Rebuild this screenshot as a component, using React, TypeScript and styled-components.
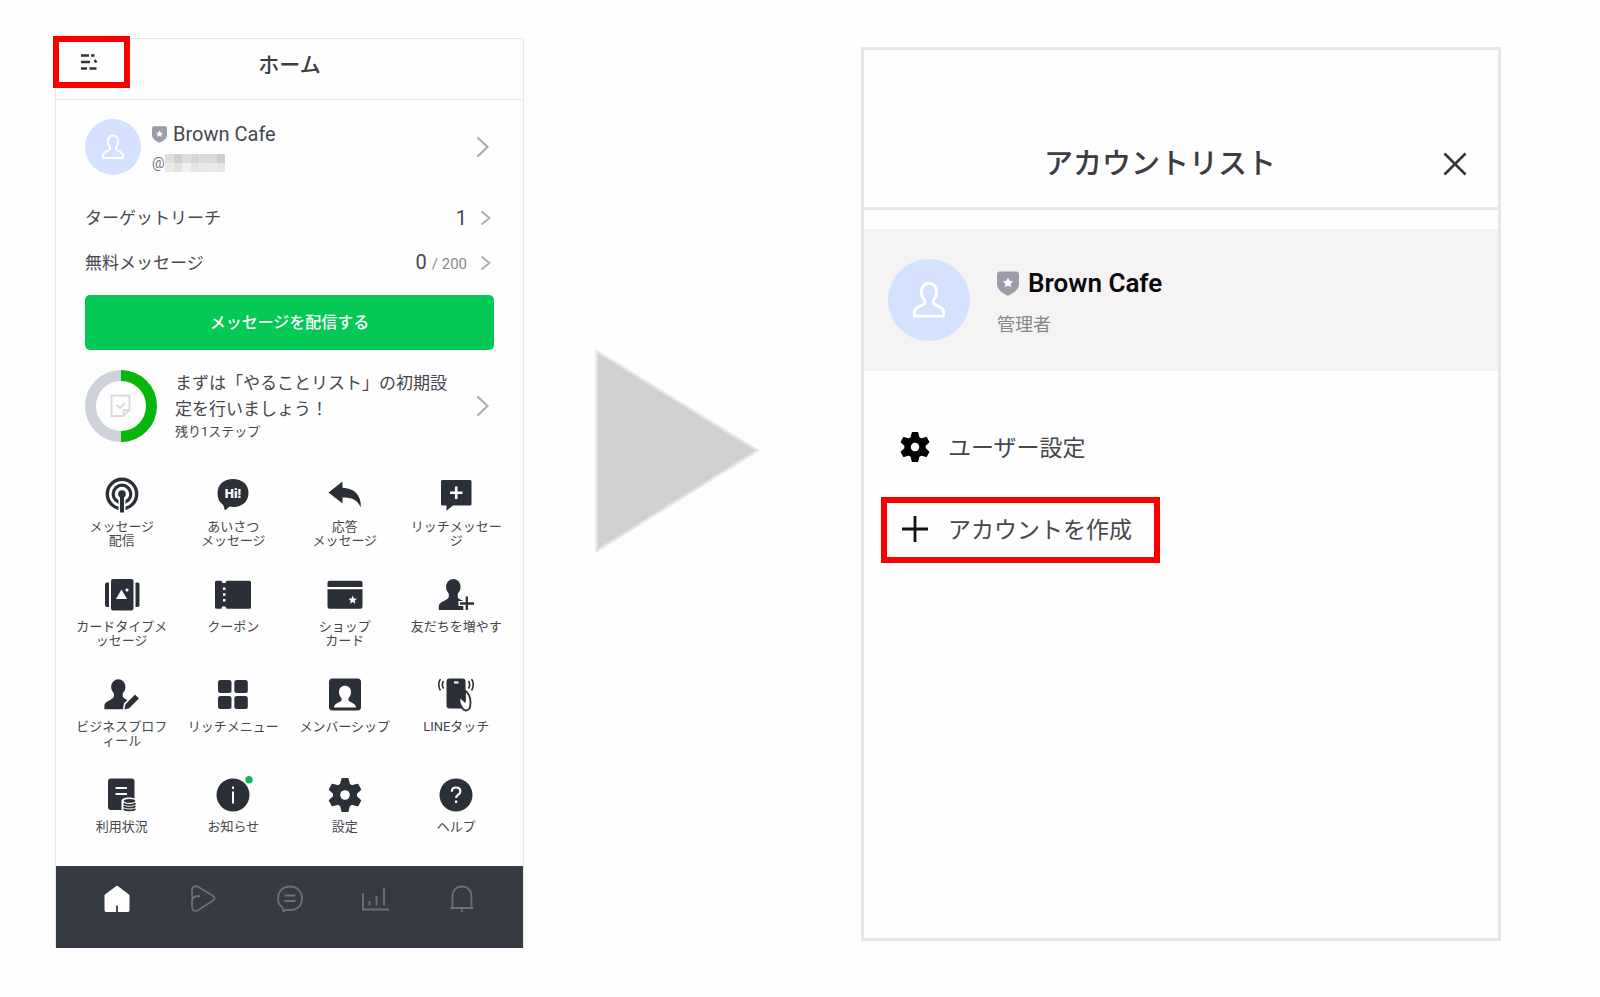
import React from "react";
import styled, { createGlobalStyle } from "styled-components";

const ink = "#2b3038";
const textColor = "#44474c";
const red = "#fb0000";
const line = "#e8e8e9";

const GlobalStyle = createGlobalStyle`
  *, *::before, *::after { box-sizing: border-box; }
  body {
    margin: 0;
    background: #fefefe;
    color: ${textColor};
    font-family: Roboto, "Noto Sans CJK JP", sans-serif;
  }
  h1, h2, p { margin: 0; font-weight: 400; }
  button {
    margin: 0;
    padding: 0;
    border: 0;
    background: none;
    color: inherit;
    font: inherit;
    text-align: left;
    cursor: pointer;
  }
  svg { display: block; flex: none; }
`;

const Page = styled.main`
  display: grid;
  grid-template-columns: minmax(0, 469fr) minmax(0, 337fr) minmax(0, 640fr);
  align-items: start;
  padding: 38px 99px 48px 55px;
`;

/* ---------- phone ---------- */

const Phone = styled.section`
  border: 1px solid ${line};
  border-bottom: 0;
`;

const PhoneHeader = styled.header`
  position: relative;
  display: flex;
  align-items: center;
  justify-content: center;
  height: 61px;
  padding-bottom: 8px;
  border-bottom: 1px solid ${line};
`;

const PhoneTitle = styled.h1`
  font-size: 21px;
  line-height: 30px;
  font-weight: 500;
  color: #3a3d42;
`;

const MenuButton = styled.button`
  position: absolute;
  left: -3px;
  top: -3px;
  width: 77px;
  height: 52px;
  padding: 0 0 0 21px;
  border: 6px solid ${red};
`;

const PhoneBody = styled.div`
  padding: 0 29px;
`;

const ProfileRow = styled.button`
  display: flex;
  align-items: center;
  width: 100%;
  padding: 19px 5px 20px 0;
`;

const AvatarCircle = styled.span<{ $size: number }>`
  flex: none;
  width: ${(p) => p.$size}px;
  height: ${(p) => p.$size}px;
  border-radius: 50%;
  background: #d5e2ff;
`;

const ProfileText = styled.span`
  flex: 1;
  display: flex;
  flex-direction: column;
  gap: 6px;
  padding-left: 11px;
`;

const ProfileName = styled.span`
  display: flex;
  align-items: center;
  gap: 6px;
  font-size: 20px;
  line-height: 26px;
`;

const ProfileId = styled.span`
  display: flex;
  align-items: center;
  font-size: 14px;
  line-height: 20px;
  color: #6f7175;
`;

const StatRow = styled.button`
  display: flex;
  align-items: center;
  width: 100%;
  height: 45px;
  padding-right: 3px;
  font-size: 17px;
  line-height: 24px;
`;

const StatLabel = styled.span`
  flex: 1;
`;

const StatValue = styled.span`
  padding-right: 13px;
  font-size: 20px;
`;

const StatTotal = styled.span`
  font-size: 15px;
  color: #85888c;
`;

const SendButton = styled.button`
  width: 100%;
  height: 55px;
  margin: 10px 0 20px;
  padding-bottom: 3px;
  border-radius: 5px;
  background: #04c955;
  color: #fff;
  font-size: 16px;
  font-weight: 500;
  text-align: center;
`;

const TodoRow = styled.button`
  display: flex;
  align-items: center;
  width: 100%;
  padding-right: 5px;
`;

const TodoText = styled.span`
  flex: 1;
  padding: 0 24px 0 18px;
  font-size: 17px;
  line-height: 26px;
`;

const TodoNote = styled.span`
  display: block;
  font-size: 13px;
  line-height: 20px;
`;

const Features = styled.nav`
  display: grid;
  grid-template-columns: repeat(4, minmax(0, 1fr));
  row-gap: 29px;
  padding: 35px 11px 18px 10px;
`;

const Feature = styled.button`
  display: flex;
  flex-direction: column;
  align-items: center;
  gap: 7px;
  height: 71px;
`;

const FeatureLabel = styled.span`
  font-size: 13px;
  line-height: 14px;
  text-align: center;
  white-space: pre;
`;

const TabBar = styled.nav`
  display: flex;
  height: 82px;
  padding: 0 18px;
  background: #363a42;
`;

const Tab = styled.button<{ $active?: boolean }>`
  flex: 1;
  display: flex;
  justify-content: center;
  padding-top: 18px;
  color: ${(p) => (p.$active ? "#fff" : "#6c7078")};
`;

/* ---------- arrow ---------- */

const ArrowCell = styled.div`
  padding: 309px 0 0 71px;
`;

/* ---------- account list ---------- */

const Card = styled.section`
  margin-top: 9px;
  padding-bottom: 375px;
  border: 3px solid #e7e7e8;
`;

const CardHeader = styled.header`
  display: flex;
  align-items: center;
  padding: 94px 31px 23px 71px;
  border-bottom: 3px solid #e7e7e8;
`;

const CardTitle = styled.h2`
  flex: 1;
  font-size: 29px;
  line-height: 40px;
  font-weight: 500;
  text-align: center;
  color: #3a3d42;
  padding-right: 58px;
`;

const AccountRow = styled.button`
  display: flex;
  align-items: center;
  gap: 27px;
  width: 100%;
  margin-top: 19px;
  padding: 30px 24px;
  background: #f5f3f4;
`;

const AccountText = styled.span`
  display: flex;
  flex-direction: column;
  gap: 14px;
  padding-top: 4px;
`;

const AccountName = styled.span`
  display: flex;
  align-items: center;
  gap: 9px;
  font-size: 26px;
  line-height: 32px;
  font-weight: 600;
  color: #0b0b0c;
`;

const AccountRole = styled.span`
  font-size: 18px;
  line-height: 24px;
  color: #85868a;
`;

const Actions = styled.div`
  display: flex;
  flex-direction: column;
  align-items: flex-start;
  gap: 16px;
  padding: 44px 17px 0;
`;

const Action = styled.button<{ $marked?: boolean }>`
  display: flex;
  align-items: center;
  gap: 17px;
  height: 66px;
  padding: 0 22px 3px 12px;
  border: 6px solid ${(p) => (p.$marked ? red : "transparent")};
  font-size: 23px;
  line-height: 32px;
`;

const ActionLabel = styled.span`
  padding-top: 4px;
`;

/* ---------- drawings ---------- */

const PersonOutline = ({ size }: { size: number }) => (
  <AvatarCircle $size={size}>
    <svg width={size} height={size} viewBox="0 0 56 56" fill="none" stroke="#fff" strokeWidth="2" strokeLinejoin="round">
      <path d="M18 39v-2.500c0-2.500 2-3.700 5-4.800 2-.8 2.600-1.700 2-3.400-1.300-1.600-2.200-3.300-2.200-5.600 0-3.700 2.200-6.200 5.200-6.200s5.200 2.500 5.200 6.200c0 2.300-.9 4-2.200 5.600-.6 1.700 0 2.600 2 3.400 3 1.100 5 2.300 5 4.800v2.500z" />
    </svg>
  </AvatarCircle>
);

const Shield = ({ width }: { width: number }) => (
  <svg width={width} height={Math.round((width * 17) / 15)} viewBox="0 0 15 17">
    <path d="M2 .3h11q2 0 2 2v6.500c0 4-3.500 6-7.500 8-4-2-7.500-4-7.500-8V2.300q0-2 2-2z" fill="#9a9ca8" />
    <path d="M7.500 4.300l1.050 2.300 2.450.3-1.800 1.700.5 2.500-2.200-1.250-2.200 1.250.5-2.500L4 6.900l2.450-.3z" fill="#fff" />
  </svg>
);

const Chevron = ({ large }: { large?: boolean }) => (
  <svg width={large ? 13 : 11} height={large ? 22 : 16} viewBox={large ? "0 0 13 22" : "0 0 11 16"} fill="none" stroke="#a9abae" strokeWidth={large ? 2.200 : 1.800}>
    <path d={large ? "M1.500 1.500L11.500 11l-10 9.500" : "M1.500 1.500L9.500 8l-8 6.500"} />
  </svg>
);

const MaskedId = () => {
  const top = ["#dedede", "#cfcfcf", "#dcdcdc", "#d6d6d6", "#dadada", "#d9d9d9", "#cdcdcd"];
  const bottom = ["#e9e9e9", "#e2e2e2", "#f0f0f0", "#e4e4e4", "#e8e8e8", "#eaeaea", "#e6e6e6"];
  return (
    <svg width="60" height="18" viewBox="0 0 63 18" preserveAspectRatio="none">
      {top.map((c, i) => <rect key={i} x={i * 9} width="9" height="9" fill={c} />)}
      {bottom.map((c, i) => <rect key={i} x={i * 9} y="9" width="9" height="9" fill={c} />)}
    </svg>
  );
};

const ListGlyph = () => (
  <svg width="18" height="18" viewBox="0 0 18 18" fill="none" stroke="#33363b" strokeWidth="2.400">
    <path d="M1 2.500h8M1 9h9M1 15.500h6M11 2.500h3.500M9.500 15.500h7M14.500 7l2 2.500" />
  </svg>
);

const TodoRing = () => (
  <svg width="72" height="72" viewBox="0 0 72 72" fill="none">
    <path d="M36 5.500a30.500 30.500 0 0 0 0 61" stroke="#cdd1d8" strokeWidth="11" />
    <path d="M36 5.500a30.500 30.500 0 0 1 0 61" stroke="#08b70c" strokeWidth="11" />
    <path d="M26.500 25.500h18v14.500l-6 6h-12zM38.500 46v-6h6M31.500 35l3.500 3 5-5" stroke="#d9dade" strokeWidth="1.800" />
  </svg>
);

const gearPath = (() => {
  const c = 18;
  const at = (r: number, deg: number) => {
    const a = (deg * Math.PI) / 180;
    return `${(c + r * Math.cos(a)).toFixed(2)} ${(c + r * Math.sin(a)).toFixed(2)}`;
  };
  const points: string[] = [];
  for (let k = 0; k < 6; k++) {
    const m = -90 + k * 60;
    points.push(at(11.300, m - 22), at(16.400, m - 10), at(16.400, m + 10), at(11.300, m + 22));
  }
  return `M${points.join("L")}Z`;
})();

const Gear = ({ size, color, hole }: { size: number; color: string; hole: string }) => (
  <svg width={size} height={size} viewBox="0 0 36 36">
    <path d={gearPath} fill={color} stroke={color} strokeWidth="1.600" strokeLinejoin="round" />
    <circle cx="18" cy="18" r="4.800" fill={hole} />
  </svg>
);

const Glyph = ({ children }: { children: React.ReactNode }) => (
  <svg width="36" height="36" viewBox="0 0 36 36" fill={ink}>{children}</svg>
);

const glyphs: Record<string, React.ReactNode> = {
  broadcast: (
    <Glyph>
      <circle cx="18" cy="17" r="14.700" fill="none" stroke={ink} strokeWidth="3.400" />
      <circle cx="18" cy="17" r="8.800" fill="none" stroke={ink} strokeWidth="3.200" />
      <path d="M14.500 18h7v18h-7z" fill="#fefefe" />
      <circle cx="18" cy="17" r="3.800" />
      <path d="M16 18h4v17.500h-4z" />
    </Glyph>
  ),
  greeting: (
    <Glyph>
      <path d="M18 2c9 0 15.500 5.500 15.500 14S27 30 18.500 30c-1.500 0-3-.1-4-.4L10 33.500l-1.800-5.500C4.500 25.500 2.500 21.500 2.500 16 2.500 7.500 9 2 18 2z" />
      <text x="18" y="21" fontFamily="Roboto, sans-serif" fontSize="13" fontWeight="900" textAnchor="middle" fill="#fff">Hi!</text>
    </Glyph>
  ),
  reply: (
    <Glyph>
      <path d="M1.500 15.500L15.500 4.500v6.200C27 11 34.500 18 33.800 30.500 30 22.500 25 20.500 15.500 20.500V26.500z" />
    </Glyph>
  ),
  rich: (
    <Glyph>
      <path d="M4.500 3h27.500q1.500 0 1.500 1.500v22.500q0 1.500-1.500 1.500H15l-6.500 5.300V28.500H4.500Q3 28.500 3 27V4.500Q3 3 4.500 3z" />
      <path d="M18.200 9.500v12.500M12 15.800h12.500" stroke="#fff" strokeWidth="2.600" />
    </Glyph>
  ),
  cards: (
    <Glyph>
      <rect x="7" y="2" width="22.500" height="31.500" rx="2" />
      <path d="M1 7.500q0-2 2-2h2V30H3q-2 0-2-2zM35.500 7.500q0-2-2-2h-2V30h2q2 0 2-2z" />
      <path d="M12 22l5.500-9.500L23 22z" fill="#fff" />
      <circle cx="23" cy="13" r="1.600" fill="#fff" />
    </Glyph>
  ),
  coupon: (
    <Glyph>
      <path d="M1.500 3.700h5a2.500 2.500 0 0 0 5 0h23q1.500 0 1.500 1.500v25q0 1.500-1.500 1.500h-23a2.500 2.500 0 0 0-5 0h-5Q0 31.700 0 30.200v-25q0-1.500 1.500-1.500z" />
      <path d="M8 10.500h2.500v2.500H8zM8 16.200h2.500v2.500H8zM8 22h2.500v2.500H8z" fill="#fff" />
    </Glyph>
  ),
  shop: (
    <Glyph>
      <path d="M2.500 3.700h31q2 0 2 2V10H.5V5.700q0-2 2-2zM.5 12.200h35v17.500q0 2-2 2h-31q-2 0-2-2z" />
      <path d="M25.700 18.500l1.200 3 3.100.2-2.400 2 .8 3.100-2.700-1.700-2.700 1.700.8-3.100-2.400-2 3.100-.2z" fill="#fff" />
    </Glyph>
  ),
  friend: (
    <Glyph>
      <ellipse cx="15.300" cy="10" rx="7.300" ry="8" />
      <path d="M10.800 14h9v6.500c1 1.800 3.500 2.500 5.500 3.500V33H.8v-3.500c0-2.500 1.700-3.800 4-5 2.800-1.400 5-2.300 6-4.500z" />
      <path d="M28.800 18v16M20.500 26.500H36" stroke="#fefefe" strokeWidth="5" />
      <path d="M28.800 19.500v13.500M22 26.500H36" stroke={ink} strokeWidth="2.300" />
    </Glyph>
  ),
  business: (
    <Glyph>
      <ellipse cx="14.300" cy="10" rx="7.200" ry="7.800" />
      <path d="M9.900 14h8.800v5.500c1 2 3 2.800 5 3.500l2 9.300H.4V29c0-2.500 1.600-3.800 3.800-5 2.700-1.300 4.700-2.200 5.700-4.500z" />
      <path d="M19.500 33.500l1.200-6.500L31 16.500l5 5-10.500 10.500z" stroke="#fefefe" strokeWidth="1.600" />
    </Glyph>
  ),
  menu: (
    <Glyph>
      <rect x="3" y="3" width="13.500" height="13" rx="2.500" />
      <rect x="19.300" y="3" width="13.500" height="13" rx="2.500" />
      <rect x="3" y="19" width="13.500" height="13" rx="2.500" />
      <rect x="19.300" y="19" width="13.500" height="13" rx="2.500" />
    </Glyph>
  ),
  member: (
    <Glyph>
      <rect x="2" y="1.500" width="32" height="32" rx="3.500" />
      <path d="M7 30.500c0-3 3-4.300 6-5.800 1.700-.9 2-2 1.300-3.700-1.300-1.500-2.300-3.500-2.300-6 0-4 2.500-6.300 6-6.300s6 2.300 6 6.300c0 2.500-1 4.500-2.300 6-.7 1.700-.4 2.800 1.300 3.700 3 1.500 6 2.800 6 5.800z" fill="#fff" />
    </Glyph>
  ),
  touch: (
    <Glyph>
      <rect x="8.500" y="1.500" width="19" height="30" rx="3" />
      <path d="M16 5.500h4.500" stroke="#fff" strokeWidth="2" />
      <path d="M5.500 4c-1.500 2-1.500 5.500 0 7.500M2.500 2c-2.300 3-2.300 8.500 0 11.500M30.500 4c1.500 2 1.500 5.500 0 7.500M33.500 2c2.300 3 2.300 8.500 0 11.500" fill="none" stroke={ink} strokeWidth="1.600" />
      <path d="M21.500 19.500l5.500 5V13.500c3 2 5.500 7 5.500 12.500 0 4.500-1.500 7.500-4.500 7.500-3.500 0-5-4.500-6.500-8z" fill="#fff" stroke={ink} strokeWidth="1.800" strokeLinejoin="round" />
    </Glyph>
  ),
  usage: (
    <Glyph>
      <rect x="4" y="1.500" width="26.500" height="31.500" rx="3" />
      <path d="M11.500 11H23M11.500 17H23" stroke="#fff" strokeWidth="2" />
      <path d="M17.500 24c0-2 3-3.500 7.500-3.500s7.500 1.500 7.500 3.500v8c0 2-3 3.500-7.500 3.500s-7.500-1.500-7.500-3.500z" fill="#fefefe" />
      <ellipse cx="25.500" cy="23.800" rx="5.800" ry="1.900" />
      <path d="M19.500 26.500c2.500 1.800 9.500 1.800 12 0M19.500 29.300c2.500 1.800 9.500 1.800 12 0M19.500 32c2.500 1.800 9.500 1.800 12 0" fill="none" stroke={ink} strokeWidth="1.700" />
    </Glyph>
  ),
  news: (
    <svg width="36" height="36" viewBox="0 0 36 36" overflow="visible">
      <circle cx="18" cy="18" r="16.500" fill={ink} />
      <path d="M18 14.500V26.500M18 9.500V12" stroke="#fff" strokeWidth="2" />
      <circle cx="34" cy="2.700" r="3.700" fill="#17b566" />
    </svg>
  ),
  settings: <Gear size={36} color={ink} hole="#fefefe" />,
  help: (
    <Glyph>
      <circle cx="18" cy="18" r="16.500" />
      <path d="M13.800 14.800c0-2.600 1.700-4.300 4.300-4.300s4.200 1.600 4.200 3.900c0 3.200-4.200 3.300-4.200 6.600M18.100 23.500v2.600" fill="none" stroke="#fff" strokeWidth="2.200" />
    </Glyph>
  ),
};

const tabs: { name: string; drawing: React.ReactNode }[] = [
  {
    name: "ホーム",
    drawing: (
      <>
        <path d="M14 2L26 11v15.500q0 1-1 1H3q-1 0-1-1V11z" fill="currentColor" stroke="currentColor" strokeLinejoin="round" strokeWidth="1" />
        <path d="M14 21.500V28" stroke="#363a42" strokeWidth="1.800" />
      </>
    ),
  },
  { name: "VOOM", drawing: <path d="M3 13.500V6c0-3.200 3-4.800 6-3.200l14.500 8.700c2.600 1.600 2.600 4 0 5.600L9 26.300c-3 1.600-6 0-6-3.200V17c0-3 2.500-5 8-5" /> },
  { name: "チャット", drawing: <path d="M6.500 23.500C3.500 21.500 2 18.500 2 15 2 7.500 7 2.500 14 2.500s12 5 12 12-5 11.500-12 11.500H9l-1.500 1.500zM8.500 11.500h11M8.500 17h11" /> },
  { name: "分析", drawing: <path d="M1 9v16.500h26M7.500 17v4.500M14.500 12v9.500M22 4v17.500" /> },
  { name: "通知", drawing: <path d="M2.500 24h23M4.500 24V12.500c0-6 3.700-10 9.500-10s9.500 4 9.500 10V24M14 24v4" /> },
];

const features: [string, string][] = [
  ["broadcast", "メッセージ\n配信"],
  ["greeting", "あいさつ\nメッセージ"],
  ["reply", "応答\nメッセージ"],
  ["rich", "リッチメッセー\nジ"],
  ["cards", "カードタイプメ\nッセージ"],
  ["coupon", "クーポン"],
  ["shop", "ショップ\nカード"],
  ["friend", "友だちを増やす"],
  ["business", "ビジネスプロフ\nィール"],
  ["menu", "リッチメニュー"],
  ["member", "メンバーシップ"],
  ["touch", "LINEタッチ"],
  ["usage", "利用状況"],
  ["news", "お知らせ"],
  ["settings", "設定"],
  ["help", "ヘルプ"],
];

export default function App() {
  return (
    <>
      <GlobalStyle />
      <Page lang="ja">
        <Phone>
          <PhoneHeader>
            <PhoneTitle>ホーム</PhoneTitle>
            <MenuButton aria-label="アカウントリスト">
              <ListGlyph />
            </MenuButton>
          </PhoneHeader>
          <PhoneBody>
            <ProfileRow>
              <PersonOutline size={56} />
              <ProfileText>
                <ProfileName><Shield width={15} />Brown Cafe</ProfileName>
                <ProfileId>@<MaskedId /></ProfileId>
              </ProfileText>
              <Chevron large />
            </ProfileRow>
            <StatRow>
              <StatLabel>ターゲットリーチ</StatLabel>
              <StatValue>1</StatValue>
              <Chevron />
            </StatRow>
            <StatRow>
              <StatLabel>無料メッセージ</StatLabel>
              <StatValue>0 <StatTotal>/ 200</StatTotal></StatValue>
              <Chevron />
            </StatRow>
            <SendButton>メッセージを配信する</SendButton>
            <TodoRow>
              <TodoRing />
              <TodoText>
                まずは「やることリスト」の初期設定を行いましょう！
                <TodoNote>残り1ステップ</TodoNote>
              </TodoText>
              <Chevron large />
            </TodoRow>
          </PhoneBody>
          <Features>
            {features.map(([icon, label]) => (
              <Feature key={icon}>
                {glyphs[icon]}
                <FeatureLabel>{label}</FeatureLabel>
              </Feature>
            ))}
          </Features>
          <TabBar>
            {tabs.map((tab, i) => (
              <Tab key={tab.name} $active={i === 0} aria-label={tab.name}>
                <svg width="28" height="28" viewBox="0 0 28 28" fill="none" stroke="currentColor" strokeWidth="1.800">
                  {tab.drawing}
                </svg>
              </Tab>
            ))}
          </TabBar>
        </Phone>

        <ArrowCell>
          <svg width="166" height="208" viewBox="0 0 166 208">
            <path d="M1.500 4L162.500 103.500 1.500 204z" fill="#d0d0d0" stroke="#e6e6e6" strokeWidth="2.500" />
          </svg>
        </ArrowCell>

        <Card>
          <CardHeader>
            <CardTitle>アカウントリスト</CardTitle>
            <button aria-label="閉じる">
              <svg width="24" height="24" viewBox="0 0 24 24" stroke="#33363b" strokeWidth="2.600">
                <path d="M1.500 1.500l21 21M22.500 1.500l-21 21" />
              </svg>
            </button>
          </CardHeader>
          <AccountRow>
            <PersonOutline size={82} />
            <AccountText>
              <AccountName><Shield width={22} />Brown Cafe</AccountName>
              <AccountRole>管理者</AccountRole>
            </AccountText>
          </AccountRow>
          <Actions>
            <Action>
              <Gear size={32} color="#000" hole="#fff" />
              <ActionLabel>ユーザー設定</ActionLabel>
            </Action>
            <Action $marked>
              <svg width="32" height="32" viewBox="0 0 32 32" stroke="#111" strokeWidth="2.800">
                <path d="M16 3v26M3 16h26" />
              </svg>
              <ActionLabel>アカウントを作成</ActionLabel>
            </Action>
          </Actions>
        </Card>
      </Page>
    </>
  );
}
